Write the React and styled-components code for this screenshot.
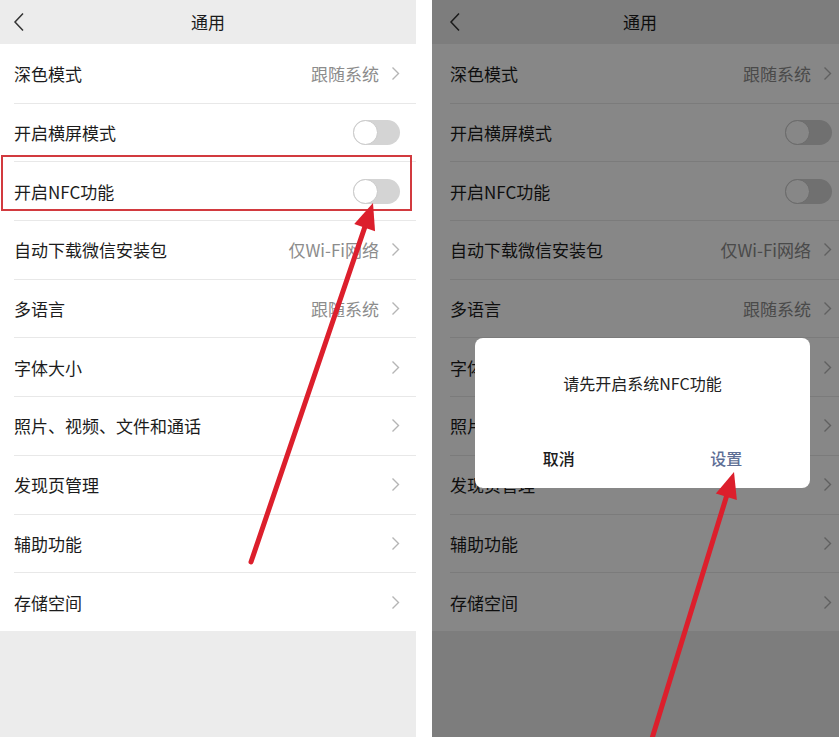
import React from "react"
import styled, { createGlobalStyle } from "styled-components"

const Global = createGlobalStyle`
  html, body { margin: 0; padding: 0; background: #fff; }
  body { font-family: "Noto Sans CJK SC", "Noto Sans", sans-serif; }
`

const Page = styled.div`
  display: flex;
  gap: 16px;
  width: 839px;
  height: 737px;
  overflow: hidden;
  background: #fff;
`

const Screen = styled.div`
  position: relative;
  flex: 0 0 416px;
  height: 737px;
  background: #ececec;
  overflow: hidden;
`

const Header = styled.div`
  display: flex;
  align-items: center;
  justify-content: center;
  position: relative;
  height: 43px;
  font-size: 17px;
  color: #1a1a1a;
`

const Back = styled.svg`
  position: absolute;
  left: ${p => p.$inset - 1}px;
  top: 12px;
`

const List = styled.div`
  background: #fff;
  margin-top: 1px;
`

const Row = styled.div`
  position: relative;
  display: flex;
  align-items: center;
  height: 58.7px;
  box-sizing: border-box;
  margin-left: ${p => p.$inset}px;
  padding-right: 16px;
  border-top: 1px solid #e8e8e8;
  font-size: 17px;
  color: #1c1c1c;

  &:first-child {
    border-top: none;
  }
`

const Highlight = styled.div`
  position: absolute;
  left: -13px;
  right: 4px;
  top: -7px;
  bottom: 9px;
  border: 2px solid #d23a3f;
  pointer-events: none;
`

const Label = styled.span`
  flex: 1;
`

const Value = styled.span`
  color: #8c8c8c;
  margin-right: 12px;
`

const Toggle = styled.div`
  position: relative;
  width: 47px;
  height: 25px;
  border-radius: 13px;
  background: #d4d4d4;

  &::after {
    content: "";
    position: absolute;
    left: 0;
    top: 0;
    width: 23px;
    height: 23px;
    border-radius: 50%;
    background: #fff;
    border: 1px solid #c9c9c9;
  }
`

const Dim = styled.div`
  position: absolute;
  inset: 0;
  background: rgba(0, 0, 0, 0.47);
`

const Dialog = styled.div`
  position: absolute;
  left: 43px;
  top: 338px;
  width: 335px;
  height: 150px;
  border-radius: 8px;
  background: #fff;
  display: flex;
  flex-direction: column;
`

const Message = styled.div`
  flex: 1;
  display: flex;
  justify-content: center;
  padding-top: 33px;
  font-size: 16px;
  color: #222;
`

const Buttons = styled.div`
  display: grid;
  grid-template-columns: 1fr 1fr;
  height: 54px;
`

const Button = styled.div`
  display: flex;
  justify-content: center;
  padding-top: 12px;
  font-size: 16px;
  font-weight: 500;
  color: ${p => (p.$primary ? "#5d6e95" : "#1c1c1c")};
`

const ArrowLayer = styled.svg`
  position: absolute;
  left: 0;
  top: 0;
  pointer-events: none;
`

const rows = [
  { label: "深色模式", value: "跟随系统" },
  { label: "开启横屏模式", toggle: true },
  { label: "开启NFC功能", toggle: true, highlight: true },
  { label: "自动下载微信安装包", value: "仅Wi-Fi网络" },
  { label: "多语言", value: "跟随系统" },
  { label: "字体大小" },
  { label: "照片、视频、文件和通话" },
  { label: "发现页管理" },
  { label: "辅助功能" },
  { label: "存储空间" },
]

const Chevron = () => (
  <svg width="9" height="15" viewBox="0 0 9 15">
    <polyline points="1.5,1.5 7.5,7.5 1.5,13.5" fill="none" stroke="#b5b5b5" strokeWidth="1.4" />
  </svg>
)

const Arrow = ({ from, to }) => {
  const dx = to[0] - from[0]
  const dy = to[1] - from[1]
  const len = Math.hypot(dx, dy)
  const ux = dx / len
  const uy = dy / len
  const bx = to[0] - ux * 26
  const by = to[1] - uy * 26
  const w = 11
  return (
    <g>
      <line x1={from[0]} y1={from[1]} x2={bx + ux * 4} y2={by + uy * 4} stroke="#dc1f2c" strokeWidth="5" strokeLinecap="round" />
      <polygon
        points={`${to[0]},${to[1]} ${bx - uy * w},${by + ux * w} ${bx + uy * w},${by - ux * w}`}
        fill="#dc1f2c"
      />
    </g>
  )
}

const Settings = ({ inset, showHighlight }) => (
  <>
    <Header>
      <Back $inset={inset} width="12" height="20" viewBox="0 0 12 20">
        <polyline points="10,1.5 2,10 10,18.5" fill="none" stroke="#333" strokeWidth="1.5" />
      </Back>
      通用
    </Header>
    <List>
      {rows.map(row => (
        <Row key={row.label} $inset={inset}>
          {showHighlight && row.highlight && <Highlight />}
          <Label>{row.label}</Label>
          {row.toggle ? (
            <Toggle />
          ) : (
            <>
              {row.value && <Value>{row.value}</Value>}
              <Chevron />
            </>
          )}
        </Row>
      ))}
    </List>
  </>
)

export default () => (
  <>
    <Global />
    <Page>
      <Screen>
        <Settings inset={14} showHighlight />
        <ArrowLayer width="416" height="737">
          <Arrow from={[251, 562]} to={[373, 203]} />
        </ArrowLayer>
      </Screen>
      <Screen>
        <Settings inset={18} />
        <Dim />
        <Dialog>
          <Message>请先开启系统NFC功能</Message>
          <Buttons>
            <Button>取消</Button>
            <Button $primary>设置</Button>
          </Buttons>
        </Dialog>
        <ArrowLayer width="416" height="737">
          <Arrow from={[218, 745]} to={[302, 472]} />
        </ArrowLayer>
      </Screen>
    </Page>
  </>
)
